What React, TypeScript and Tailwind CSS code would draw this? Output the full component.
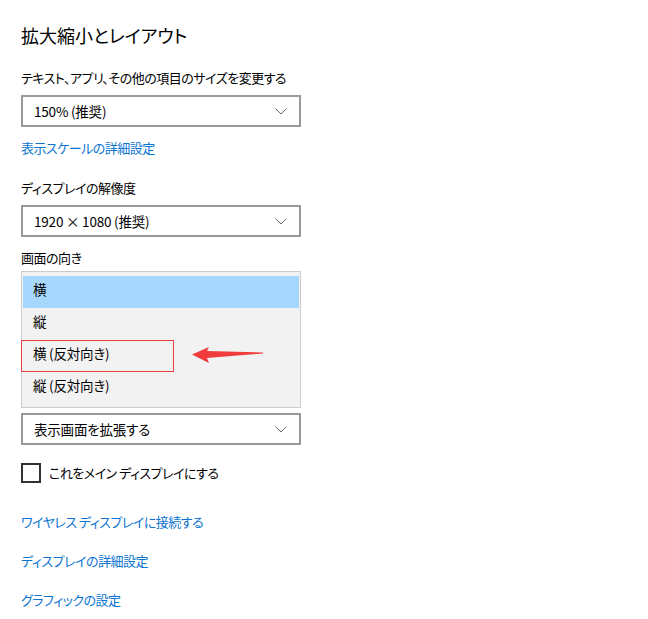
import React from "react";

const font = "font-['Noto_Sans_CJK_JP',sans-serif] [font-feature-settings:'palt']";

function Chevron() {
  return (
    <svg width="12" height="7" viewBox="0 0 12 7" fill="none">
      <path d="M0.5 0.5 L6 6 L11.5 0.5" stroke="#6b6b6b" strokeWidth="1" />
    </svg>
  );
}

function Dropdown({ value }: { value: string }) {
  return (
    <div className="w-[280px] h-[32px] border-2 border-[#999999] bg-white flex items-center justify-between pl-[11px] pr-[12px]">
      <span className="text-[13.5px] leading-[20px] tracking-[-0.2px] text-black">{value}</span>
      <Chevron />
    </div>
  );
}

function Label({ children, className = "" }: { children: React.ReactNode; className?: string }) {
  return (
    <div className={`text-[13px] leading-[20px] tracking-[-0.5px] text-black ${className}`}>{children}</div>
  );
}

function Link({ children, className = "" }: { children: React.ReactNode; className?: string }) {
  return (
    <div className={`text-[13px] leading-[20px] tracking-[-0.5px] text-[#0a74d0] ${className}`}>{children}</div>
  );
}

export default function App() {
  const options = ["横", "縦", "横 (反対向き)", "縦 (反対向き)"];

  return (
    <div className={`min-h-screen bg-white pl-[21px] pt-[21px] ${font}`}>
      {/* Header */}
      <h1 className="text-[18px] leading-[28px] text-black">拡大縮小とレイアウト</h1>

      <Label className="mt-[19px]">テキスト、アプリ、その他の項目のサイズを変更する</Label>
      <div className="mt-[7px]">
        <Dropdown value="150% (推奨)" />
      </div>
      <Link className="mt-[11px]">表示スケールの詳細設定</Link>

      <Label className="mt-[20px]">ディスプレイの解像度</Label>
      <div className="mt-[7px]">
        <Dropdown value="1920 × 1080 (推奨)" />
      </div>

      <Label className="mt-[11px]">画面の向き</Label>

      {/* Orientation list (open) */}
      <div className="relative mt-[3px] w-[280px] h-[137px] border border-[#cccccc] bg-[#f2f2f2] px-[1px] pt-[4px]">
        {options.map((opt, i) => (
          <div
            key={opt}
            className={`h-[32px] flex items-center pl-[10px] pb-[6px] text-[13.5px] leading-[20px] tracking-[-0.2px] text-black ${
              i === 0 ? "bg-[#a6d8fd]" : ""
            }`}
          >
            {opt}
          </div>
        ))}

        {/* red highlight box */}
        <div className="absolute left-[-1px] top-[68px] w-[153px] h-[32px] border border-[#ef4040]" />

        {/* red arrow */}
        <svg
          className="absolute left-[170px] top-[74px]"
          width="72"
          height="18"
          viewBox="0 0 72 18"
        >
          <polygon
            points="0,8.5 17,1 15,5 71,6.5 71,7.5 15,12 17,17"
            fill="#f03c3c"
          />
        </svg>
      </div>

      <div className="mt-[5px]">
        <Dropdown value="表示画面を拡張する" />
      </div>

      {/* Checkbox */}
      <div className="mt-[18px] flex items-center gap-[8px]">
        <div className="w-[20px] h-[20px] border-2 border-[#333333] bg-white" />
        <span className="text-[13px] leading-[20px] tracking-[-0.5px] text-black">これをメイン ディスプレイにする</span>
      </div>

      <Link className="mt-[29px]">ワイヤレス ディスプレイに接続する</Link>
      <Link className="mt-[19px]">ディスプレイの詳細設定</Link>
      <Link className="mt-[19px]">グラフィックの設定</Link>
    </div>
  );
}
